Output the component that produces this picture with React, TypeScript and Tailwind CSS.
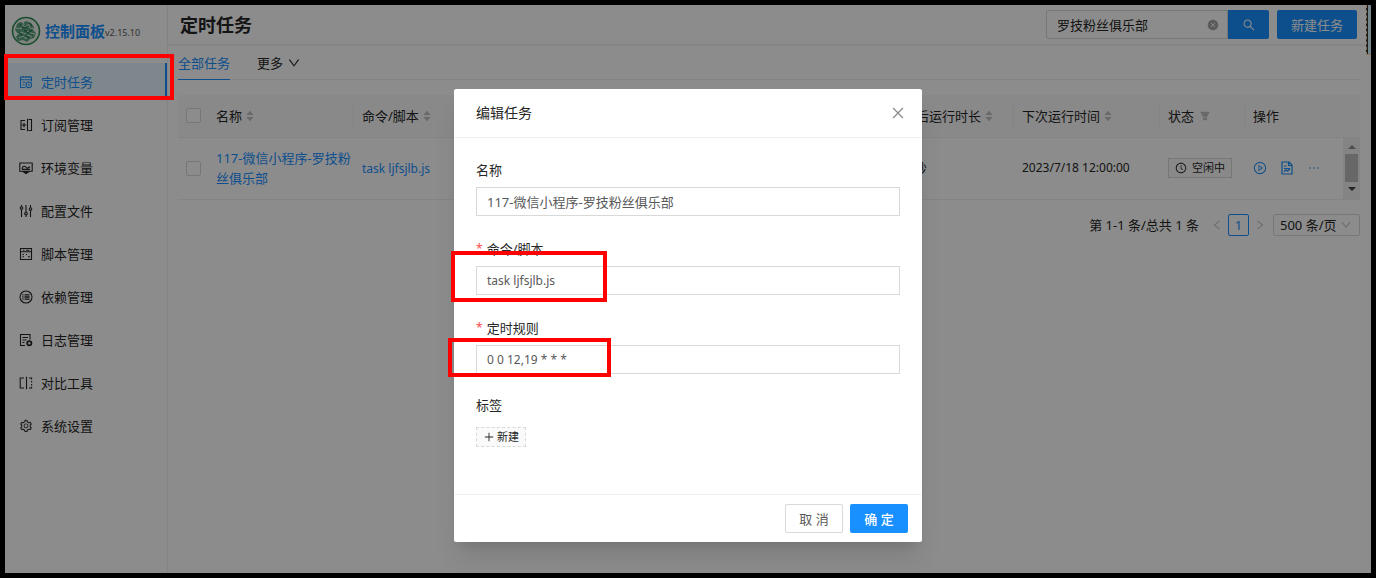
import React from "react";
import {
  AiFillCaretDown,
  AiFillCaretUp,
  AiFillCloseCircle,
  AiFillFilter,
  AiOutlineClockCircle,
  AiOutlineClose,
  AiOutlineDown,
  AiOutlineEllipsis,
  AiOutlineLeft,
  AiOutlinePlayCircle,
  AiOutlinePlus,
  AiOutlineRight,
  AiOutlineSearch,
  AiOutlineSetting,
} from "react-icons/ai";

interface MenuItem {
  label: string;
  icon: React.ReactNode;
  active?: boolean;
}

// Shared wrapper for the line icons in the side menu
const LineIcon = ({ children }: { children: React.ReactNode }) => (
  <svg viewBox="0 0 14 14" className="h-[14px] w-[14px]" fill="none" stroke="currentColor" strokeWidth="1.1">
    {children}
  </svg>
);

const menu: MenuItem[] = [
  {
    label: "定时任务",
    active: true,
    icon: (
      <LineIcon>
        <path d="M6.500 12.500H1.500V2h11v4.500M1.500 4.800h11M4 1v2M7 1v2M10 1v2M3.500 7.200h3M3.500 9.700h2" />
        <circle cx="9.800" cy="9.800" r="2.800" />
        <path d="M9.600 8.400v1.600h1.200" />
      </LineIcon>
    ),
  },
  {
    label: "订阅管理",
    icon: (
      <LineIcon>
        <path d="M9.500 1.500H12.500v11H9.500M6 2.500H2v9h4M8.500 .8v12.400M2.800 7h4.400M5 4.800v4.400" />
      </LineIcon>
    ),
  },
  {
    label: "环境变量",
    icon: (
      <LineIcon>
        <path d="M.8 2h12.400v8.300H.8zM3 8.200c.5-3.500 3-3.500 4-2s2 1 4-.7M3 8.400h8" />
        <path d="M4 10.500h6L7 12.600z" fill="currentColor" />
      </LineIcon>
    ),
  },
  {
    label: "配置文件",
    icon: (
      <LineIcon>
        <path d="M2.500 1v1.700M2.500 5.300V13M7 1v7.200M7 10.800V13M11.500 1v2.700M11.500 6.300V13" />
        <circle cx="2.500" cy="4" r="1.300" />
        <circle cx="7" cy="9.500" r="1.300" />
        <circle cx="11.500" cy="5" r="1.300" />
      </LineIcon>
    ),
  },
  {
    label: "脚本管理",
    icon: (
      <LineIcon>
        <path d="M1.500 1.500h11v11h-11zM1.500 4.800h11M4 3.200h1.500M7 3.200h3.500M3.500 7.500h1.500M5 9.800H3.500M7 7.500h1M9 9.800h2" />
      </LineIcon>
    ),
  },
  {
    label: "依赖管理",
    icon: (
      <LineIcon>
        <circle cx="7" cy="7" r="6" />
        <path d="M3.300 4.800h1.200M5.500 4.800h5M3.300 7h1.200M5.500 7h5M3.300 9.200h1.200M5.500 9.200h5" strokeWidth="1.300" />
      </LineIcon>
    ),
  },
  {
    label: "日志管理",
    icon: (
      <LineIcon>
        <path d="M6 12.500H1.500V1.500h9.500V6.500M3.500 4.500h5.500M3.500 7h4M3.500 9.500h2" />
        <circle cx="10.300" cy="10.300" r="2.100" strokeWidth="1.800" />
      </LineIcon>
    ),
  },
  {
    label: "对比工具",
    icon: (
      <LineIcon>
        <path d="M5 2H1.200v10H5M7.500 .8v12.400M10 2h2.600v1.500M12.600 5v1.500M12.600 8v1.500M12.600 10.800V12H10" />
      </LineIcon>
    ),
  },
  { label: "系统设置", icon: <AiOutlineSetting className="h-[14px] w-[14px]" /> },
];

const Logo = () => (
  <svg viewBox="0 0 30 30" className="h-[30px] w-[30px] shrink-0">
    <circle cx="15" cy="15" r="13.500" fill="#eef3ef" stroke="#2c8a52" strokeWidth="1.600" />
    <path
      d="M6 8l3-2 3 1 3-2 5 2 3 4-1 3 3 3-2 5-4 1-3 3-4-2-5 1-2-4 2-3-3-4z"
      fill="#5aa37a"
    />
    <path
      d="M5 12l5 1 1-4 3 2 4-3 1 4 5 1M6 18l5-2 3 2 3-3 3 2 4 1M8 22l4-2 3 3 2-4 4 2M12 5l1 4"
      fill="none"
      stroke="#dbe9e0"
      strokeWidth="1"
    />
    <path d="M9 8l3 4 4-1M13 14l4 3 4-3M8 16l3 4M18 7l3 3M15 20l3 2" fill="none" stroke="#2a7549" strokeWidth="1.100" />
  </svg>
);

const LogIcon = () => (
  <svg viewBox="0 0 14 14" className="h-[14px] w-[14px]" fill="none" stroke="currentColor" strokeWidth="1.200">
    <path d="M2 1h7l3 3v9H2zM8.500 1v3.500H12M4 7.500h6M4 10.500l2-1.500 1.500 1 2.500-2M4 5h2.500" />
  </svg>
);

const Sorter = () => (
  <span className="flex flex-col text-[#bfbfbf]">
    <AiFillCaretUp className="-mb-1 h-[10px] w-[10px]" />
    <AiFillCaretDown className="h-[10px] w-[10px]" />
  </span>
);

const HeadCell = ({ children, last }: { children: React.ReactNode; last?: boolean }) => (
  <th scope="col" className="p-0 font-normal">
    <div className={last ? "flex h-6 items-center pl-2" : "flex h-6 items-center gap-[3px] border-r border-[#f0f0f0] pl-2"}>
      {children}
    </div>
  </th>
);

const Sidebar = () => (
  <aside className="w-[163px] shrink-0 border-r border-[#f0f0f0] bg-white">
    <a href="#" className="flex h-[58px] items-center gap-1 pb-[6px] pl-[6px]">
      <Logo />
      <span className="whitespace-nowrap text-[15px] font-bold text-[#1890ff]">控制面板</span>
      <span className="-ml-1 pt-1 text-[9px] text-[#595959]">v2.15.10</span>
    </a>
    <ul className="flex flex-col gap-[6px]">
      {menu.map((item) => (
        <li key={item.label} className="relative">
          <a
            href="#"
            className={
              item.active
                ? "flex h-[37px] items-center gap-2 border-r-2 border-[#1890ff] bg-[#e6f7ff] pl-[14px] text-[#1890ff]"
                : "flex h-[37px] items-center gap-2 pl-[14px]"
            }
          >
            {item.icon}
            {item.label}
          </a>
          {item.active && (
            <span className="pointer-events-none absolute -top-[9px] -left-px z-30 h-[46px] w-[170px] border-4 border-[#ff0000]" />
          )}
        </li>
      ))}
    </ul>
  </aside>
);

const TopBar = () => (
  <header className="flex h-10 items-center justify-between border-b border-[#f0f0f0] pr-[14px] pl-3 shadow-xs">
    <h1 className="text-[18px] font-bold">定时任务</h1>
    <div className="flex">
      <div className="flex h-[29px] w-[182px] items-center rounded-l-xs border border-[#d9d9d9] pr-2 pl-[10px]">
        <input
          aria-label="搜索任务"
          defaultValue="罗技粉丝俱乐部"
          className="w-full min-w-0 bg-transparent outline-none"
        />
        <button aria-label="清空" className="text-[#a6a6a6]">
          <AiFillCloseCircle className="h-3 w-3" />
        </button>
      </div>
      <button
        aria-label="搜索"
        className="flex h-[29px] w-[41px] items-center justify-center rounded-r-xs bg-[#1890ff] text-white"
      >
        <AiOutlineSearch className="h-[14px] w-[14px]" />
      </button>
      <button className="ml-2 h-[29px] w-20 rounded-xs bg-[#1890ff] text-white">新建任务</button>
    </div>
  </header>
);

const TaskTable = () => (
  <table className="mt-[15px] w-full table-fixed border-collapse text-left">
    <colgroup>
      <col className="w-[30px]" />
      <col className="w-[146px]" />
      <col />
      <col className="w-[119px]" />
      <col className="w-[146px]" />
      <col className="w-[85px]" />
      <col className="w-[98px]" />
      <col className="w-[17px]" />
    </colgroup>
    <thead>
      <tr className="h-[42px] border-b border-[#f0f0f0] bg-[#fafafa]">
        <th className="p-0 pl-2">
          <input
            type="checkbox"
            aria-label="全选"
            className="block h-[15px] w-[15px] appearance-none rounded-xs border border-[#d9d9d9] bg-white"
          />
        </th>
        <HeadCell>
          名称 <Sorter />
        </HeadCell>
        <HeadCell>
          命令/脚本 <Sorter />
        </HeadCell>
        <HeadCell>
          最后运行时长 <Sorter />
        </HeadCell>
        <HeadCell>
          下次运行时间 <Sorter />
        </HeadCell>
        <HeadCell>
          状态 <AiFillFilter className="ml-[2px] h-3 w-3 text-[#bfbfbf]" />
        </HeadCell>
        <HeadCell last>操作</HeadCell>
        <td />
      </tr>
    </thead>
    <tbody>
      <tr className="h-[62px] border-b border-[#f0f0f0]">
        <td className="p-0 pl-2">
          <input
            type="checkbox"
            aria-label="选择任务"
            className="block h-[15px] w-[15px] appearance-none rounded-xs border border-[#d9d9d9] bg-white"
          />
        </td>
        <td className="p-0 pl-2">
          <a href="#" className="text-[#1890ff]">
            117-微信小程序-罗技粉丝俱乐部
          </a>
        </td>
        <td className="p-0 pl-2">
          <a href="#" className="text-xs text-[#1890ff]">
            task ljfsjlb.js
          </a>
        </td>
        <td className="p-0 pl-2">7 秒</td>
        <td className="p-0 pl-2 text-xs">2023/7/18 12:00:00</td>
        <td className="p-0 pl-2">
          <span className="flex h-5 w-16 items-center justify-center gap-[5px] border border-[#d9d9d9] bg-[#fafafa] text-[11px]">
            <AiOutlineClockCircle className="h-3 w-3" />
            空闲中
          </span>
        </td>
        <td className="p-0 pl-2">
          <div className="flex gap-[13px] text-[#1890ff]">
            <button aria-label="运行">
              <AiOutlinePlayCircle className="h-[14px] w-[14px]" />
            </button>
            <button aria-label="日志">
              <LogIcon />
            </button>
            <button aria-label="更多操作">
              <AiOutlineEllipsis className="h-[14px] w-[14px]" />
            </button>
          </div>
        </td>
        <td className="bg-[#f1f1f1] p-0">
          <div className="flex flex-col items-center gap-[5px]">
            <svg viewBox="0 0 8 5" className="h-[5px] w-2 fill-[#8c8c8c]">
              <path d="M0 5l4-4 4 4z" />
            </svg>
            <span className="h-7 w-[13px] bg-[#bcbcbc]" />
            <svg viewBox="0 0 8 5" className="h-[5px] w-2 fill-[#404040]">
              <path d="M0 0l4 4 4-4z" />
            </svg>
          </div>
        </td>
      </tr>
    </tbody>
  </table>
);

const Pagination = () => (
  <nav className="mt-[14px] flex items-center justify-end">
    <span>第 1-1 条/总共 1 条</span>
    <button aria-label="上一页" className="ml-3 text-[#bfbfbf]">
      <AiOutlineLeft className="h-3 w-3" />
    </button>
    <button className="mx-[5px] h-[22px] w-[21px] rounded-xs border border-[#1890ff] text-[#1890ff]">1</button>
    <button aria-label="下一页" className="text-[#bfbfbf]">
      <AiOutlineRight className="h-3 w-3" />
    </button>
    <div className="relative ml-[7px]">
      <select
        aria-label="每页条数"
        className="block h-[22px] w-[87px] appearance-none rounded-xs border border-[#d9d9d9] pl-[6px] outline-none"
      >
        <option>500 条/页</option>
      </select>
      <AiOutlineDown className="pointer-events-none absolute top-[5px] right-2 h-3 w-3 text-[#bfbfbf]" />
    </div>
  </nav>
);

interface FieldProps {
  id: string;
  label: string;
  value: string;
  required?: boolean;
  latin?: boolean;
  mark?: React.ReactNode;
}

const Field = ({ id, label, value, required, latin, mark }: FieldProps) => (
  <div className="relative">
    <label htmlFor={id} className="flex h-5 items-center gap-1">
      {required && <span className="text-xs text-[#ff4d4f]">*</span>}
      {label}
    </label>
    <input
      id={id}
      defaultValue={value}
      className={
        latin
          ? "mt-[7px] block h-[29px] w-full border border-[#d9d9d9] px-[10px] text-xs text-[#595959] outline-none"
          : "mt-[7px] block h-[29px] w-full border border-[#d9d9d9] px-[10px] text-[#595959] outline-none"
      }
    />
    {mark}
  </div>
);

const EditDialog = () => (
  <div
    role="dialog"
    aria-labelledby="dialog-title"
    className="w-[468px] self-start rounded-xs bg-white text-[#262626] shadow-xl"
  >
    <div className="flex h-[49px] items-center justify-between border-b border-[#f0f0f0] pr-4 pl-[22px]">
      <h2 id="dialog-title" className="text-[14px]">
        编辑任务
      </h2>
      <button aria-label="关闭" className="text-[#8c8c8c]">
        <AiOutlineClose className="h-4 w-4" />
      </button>
    </div>
    <form className="px-[22px] pt-[22px] pb-[47px]">
      <div className="flex flex-col gap-[23px]">
        <Field id="name" label="名称" value="117-微信小程序-罗技粉丝俱乐部" />
        <Field
          id="command"
          label="命令/脚本"
          value="task ljfsjlb.js"
          required
          latin
          mark={
            <span className="pointer-events-none absolute top-[12px] -left-[25px] h-[51px] w-[156px] border-4 border-[#ff0000]" />
          }
        />
        <Field
          id="schedule"
          label="定时规则"
          value="0 0 12,19 * * *"
          required
          latin
          mark={
            <span className="pointer-events-none absolute top-5 -left-[28px] h-[39px] w-[163px] border-4 border-[#ff0000]" />
          }
        />
      </div>
      <div className="mt-[21px] h-5">标签</div>
      <button
        type="button"
        className="mt-3 flex h-5 w-[50px] items-center justify-center gap-[2px] border border-dashed border-[#d9d9d9] bg-[#fafafa] text-[11px]"
      >
        <AiOutlinePlus className="h-3 w-3" />
        新建
      </button>
    </form>
    <div className="flex h-12 items-center justify-end gap-[7px] border-t border-[#f0f0f0] pr-[14px]">
      <button className="h-[29px] w-[58px] rounded-xs border border-[#d9d9d9] text-[#595959]">取 消</button>
      <button className="h-[29px] w-[58px] rounded-xs bg-[#1890ff] font-medium text-white">确 定</button>
    </div>
  </div>
);

export default function App() {
  return (
    <div className="flex min-h-screen bg-black p-[5px] font-['Noto_Sans','Noto_Sans_CJK_SC',sans-serif] text-[13px] leading-5 text-[#262626]">
      <div className="relative flex grow bg-white">
        <Sidebar />
        <main className="min-w-0 grow">
          <TopBar />
          <div className="pr-[11px] pl-[10px]">
            <div className="flex h-[35px] gap-[27px] border-b border-[#f0f0f0]">
              <button className="-mb-px border-b border-[#1890ff] pt-px text-[#1890ff]">全部任务</button>
              <button className="flex items-center gap-1 pt-px">
                更多 <AiOutlineDown className="h-[14px] w-[14px]" />
              </button>
            </div>
            <TaskTable />
            <Pagination />
          </div>
        </main>
        {/* edge of a docked panel peeking in from the right */}
        <div className="absolute top-0 right-0 h-[50px] w-[5px] border-b border-l border-dashed border-[#ffd9a0] bg-[#303030] pl-px">
          <div className="h-full bg-[#d0f4ff]" />
        </div>
        <div className="absolute inset-0 z-20 flex justify-center bg-black/45 pt-[84px]">
          <EditDialog />
        </div>
      </div>
    </div>
  );
}
